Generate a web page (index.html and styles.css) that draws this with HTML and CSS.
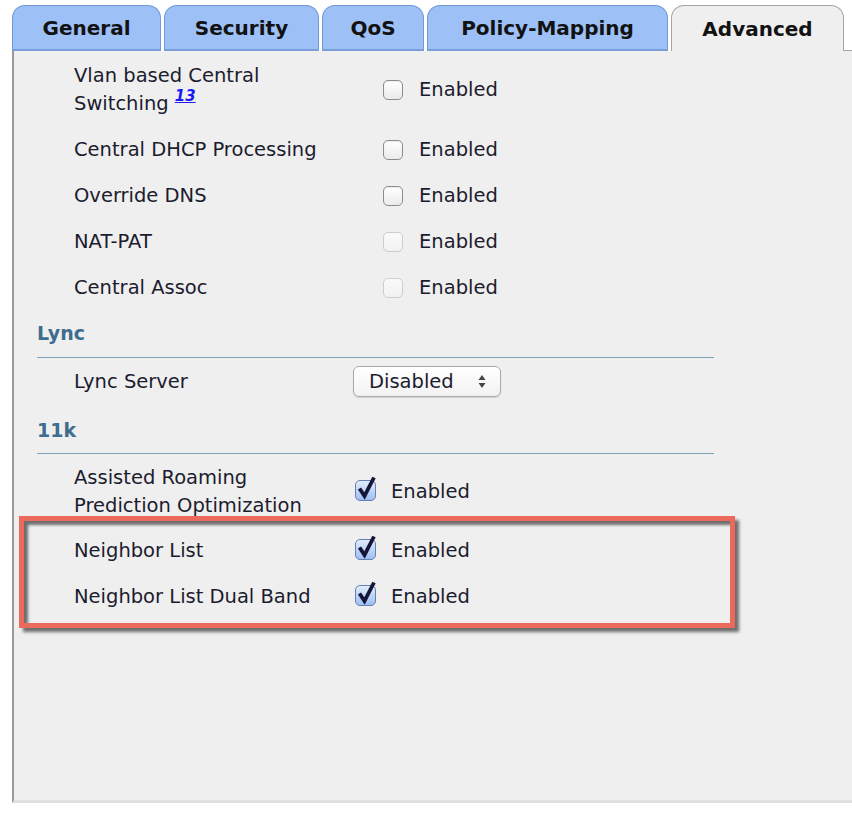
FILE: index.html
```html
<!DOCTYPE html>
<html>
<head>
<meta charset="utf-8">
<link rel="stylesheet" href="styles.css">
</head>
<body>
<div class="tabs">
  <div class="tab tab-general">General</div>
  <div class="tab tab-security">Security</div>
  <div class="tab tab-qos">QoS</div>
  <div class="tab tab-policy">Policy-Mapping</div>
  <div class="tab tab-advanced active">Advanced</div>
  <div class="tab-filler"></div>
</div>
<div class="panel">
  <div class="rows rows-a">
    <div class="row">
      <div class="label">Vlan based Central<br>Switching <a class="ref">13</a></div>
      <div class="control"><span class="cb"></span><span class="txt">Enabled</span></div>
    </div>
    <div class="row">
      <div class="label">Central DHCP Processing</div>
      <div class="control"><span class="cb"></span><span class="txt">Enabled</span></div>
    </div>
    <div class="row">
      <div class="label">Override DNS</div>
      <div class="control"><span class="cb"></span><span class="txt">Enabled</span></div>
    </div>
    <div class="row">
      <div class="label">NAT-PAT</div>
      <div class="control"><span class="cb disabled"></span><span class="txt">Enabled</span></div>
    </div>
    <div class="row">
      <div class="label">Central Assoc</div>
      <div class="control"><span class="cb disabled"></span><span class="txt">Enabled</span></div>
    </div>
  </div>

  <div class="section section-lync">Lync</div>
  <div class="rows rows-b">
    <div class="row row-select">
      <div class="label">Lync Server</div>
      <div class="control">
        <div class="select"><span class="sel-text">Disabled</span>
          <svg class="sel-arrows" width="8" height="13" viewBox="0 0 8 13"><path d="M4 0 L7.5 5 L0.5 5 Z M4 13 L7.5 8 L0.5 8 Z" fill="#444"/></svg>
        </div>
      </div>
    </div>
  </div>

  <div class="section section-11k">11k</div>
  <div class="rows rows-b">
    <div class="row row-tall">
      <div class="label">Assisted Roaming<br>Prediction Optimization</div>
      <div class="control">
        <svg class="cbc" width="25" height="28" viewBox="0 0 25 28"><defs><linearGradient id="g1" x1="0" y1="0" x2="0" y2="1"><stop offset="0" stop-color="#e4eefc"/><stop offset="1" stop-color="#9cbdf2"/></linearGradient></defs><rect x="1.5" y="5.5" width="20" height="20" rx="4.5" fill="url(#g1)" stroke="#6580b3"/><path d="M5.5 13.5 L10.5 21 L20 2.5" fill="none" stroke="#15153a" stroke-width="3.8" stroke-linejoin="miter"/></svg>
        <span class="txt">Enabled</span>
      </div>
    </div>
    <div class="row">
      <div class="label">Neighbor List</div>
      <div class="control">
        <svg class="cbc" width="25" height="28" viewBox="0 0 25 28"><defs><linearGradient id="g2" x1="0" y1="0" x2="0" y2="1"><stop offset="0" stop-color="#e4eefc"/><stop offset="1" stop-color="#9cbdf2"/></linearGradient></defs><rect x="1.5" y="5.5" width="20" height="20" rx="4.5" fill="url(#g2)" stroke="#6580b3"/><path d="M5.5 13.5 L10.5 21 L20 2.5" fill="none" stroke="#15153a" stroke-width="3.8" stroke-linejoin="miter"/></svg>
        <span class="txt">Enabled</span>
      </div>
    </div>
    <div class="row">
      <div class="label">Neighbor List Dual Band</div>
      <div class="control">
        <svg class="cbc" width="25" height="28" viewBox="0 0 25 28"><defs><linearGradient id="g3" x1="0" y1="0" x2="0" y2="1"><stop offset="0" stop-color="#e4eefc"/><stop offset="1" stop-color="#9cbdf2"/></linearGradient></defs><rect x="1.5" y="5.5" width="20" height="20" rx="4.5" fill="url(#g3)" stroke="#6580b3"/><path d="M5.5 13.5 L10.5 21 L20 2.5" fill="none" stroke="#15153a" stroke-width="3.8" stroke-linejoin="miter"/></svg>
        <span class="txt">Enabled</span>
      </div>
    </div>
  </div>

  <div class="highlight"></div>
</div>
</body>
</html>
```

FILE: styles.css
```css
html, body {
  margin: 0;
  padding: 0;
  background: #ffffff;
}
body {
  font-family: "DejaVu Sans", Verdana, sans-serif;
  color: #1c1c2e;
  width: 852px;
  height: 814px;
  overflow: hidden;
}

/* Tabs */
.tabs {
  display: flex;
  align-items: flex-end;
  padding-top: 5px;
  padding-left: 12px;
  height: 51px;
  box-sizing: border-box;
}
.tab {
  box-sizing: border-box;
  height: 46px;
  margin-right: 3px;
  border: 1px solid #7099d6;
  border-bottom: 2px solid #7a9fd8;
  border-radius: 13px 13px 0 0;
  background: #9dc0f7;
  font-family: "DejaVu Sans", Verdana, sans-serif;
  font-weight: bold;
  font-size: 20px;
  color: #121212;
  display: flex;
  align-items: center;
  justify-content: center;
  padding-top: 1px;
}
.tab-general { width: 149px; }
.tab-security { width: 155px; }
.tab-qos { width: 102px; }
.tab-policy { width: 241px; }
.tab-advanced {
  width: 173px;
  margin-right: 0;
  background: #efefef;
  border: 1px solid #a5a5a5;
  border-bottom: none;
}
.tab-filler {
  flex: 1;
  height: 46px;
  box-sizing: border-box;
  border-bottom: 1px solid #a5a5a5;
}

/* Panel */
.panel {
  position: relative;
  margin-left: 12px;
  box-sizing: border-box;
  height: 752px;
  background: #efefef;
  border-left: 2px solid #9a9a9a;
  border-bottom: 3px solid #e0e0e0;
  padding-top: 2px;
}

.rows {
  display: flex;
  flex-direction: column;
}
.row {
  display: flex;
  align-items: center;
  padding: 9px 0;
  font-size: 19.5px;
  line-height: 28px;
}
.row-select {
  padding: 8px 0 7px;
}
.row-tall {
  padding: 10px 0 8px;
}
.label {
  padding-left: 60px;
  flex: none;
}
.rows-a .label { width: 309px; }
.rows-b .label { width: 279px; }

.control {
  display: flex;
  align-items: center;
}
.cb {
  width: 20px;
  height: 20px;
  box-sizing: border-box;
  border: 1px solid #8c8c8c;
  border-radius: 5px;
  background: linear-gradient(#ffffff, #ebebeb);
  box-shadow: inset 0 1px 1px rgba(0,0,0,0.08);
  margin-right: 16px;
}
.cb.disabled {
  border-color: #cdcdcd;
  background: linear-gradient(#fafafa, #f1f1f1);
  box-shadow: none;
}
.cbc {
  margin-left: 1px;
  margin-right: 12px;
  margin-top: -6px;
}

.ref {
  font-size: 15px;
  font-weight: bold;
  font-style: italic;
  color: #1b1bef;
  text-decoration: underline;
  vertical-align: 9px;
  line-height: 0;
}

/* Section headers */
.section {
  margin-left: 23px;
  width: 677px;
  line-height: 28px;
  font-size: 19px;
  font-weight: bold;
  color: #3e6d8e;
  border-bottom: 1px solid #7fa1b7;
}
.section-lync {
  padding: 8px 0 10px;
}
.section-11k {
  padding: 12px 0 9px;
}

/* Select */
.select {
  box-sizing: border-box;
  width: 148px;
  height: 31px;
  border: 1px solid #a9a9a9;
  border-radius: 6px;
  background: linear-gradient(#ffffff, #f2f2f2);
  box-shadow: 0 1px 1px rgba(0,0,0,0.12);
  display: flex;
  align-items: center;
  padding-left: 15px;
  font-size: 19.5px;
}
.sel-text {
  flex: 1;
}
.sel-arrows {
  margin-right: 14px;
}

/* Annotation highlight */
.highlight {
  position: absolute;
  left: 5px;
  top: 465px;
  width: 716px;
  height: 112px;
  box-sizing: border-box;
  border: 5px solid #ec6a5c;
  box-shadow: 4px 4px 3px rgba(40,40,40,0.65), inset 4px 4px 3px rgba(40,40,40,0.65);
}
```
